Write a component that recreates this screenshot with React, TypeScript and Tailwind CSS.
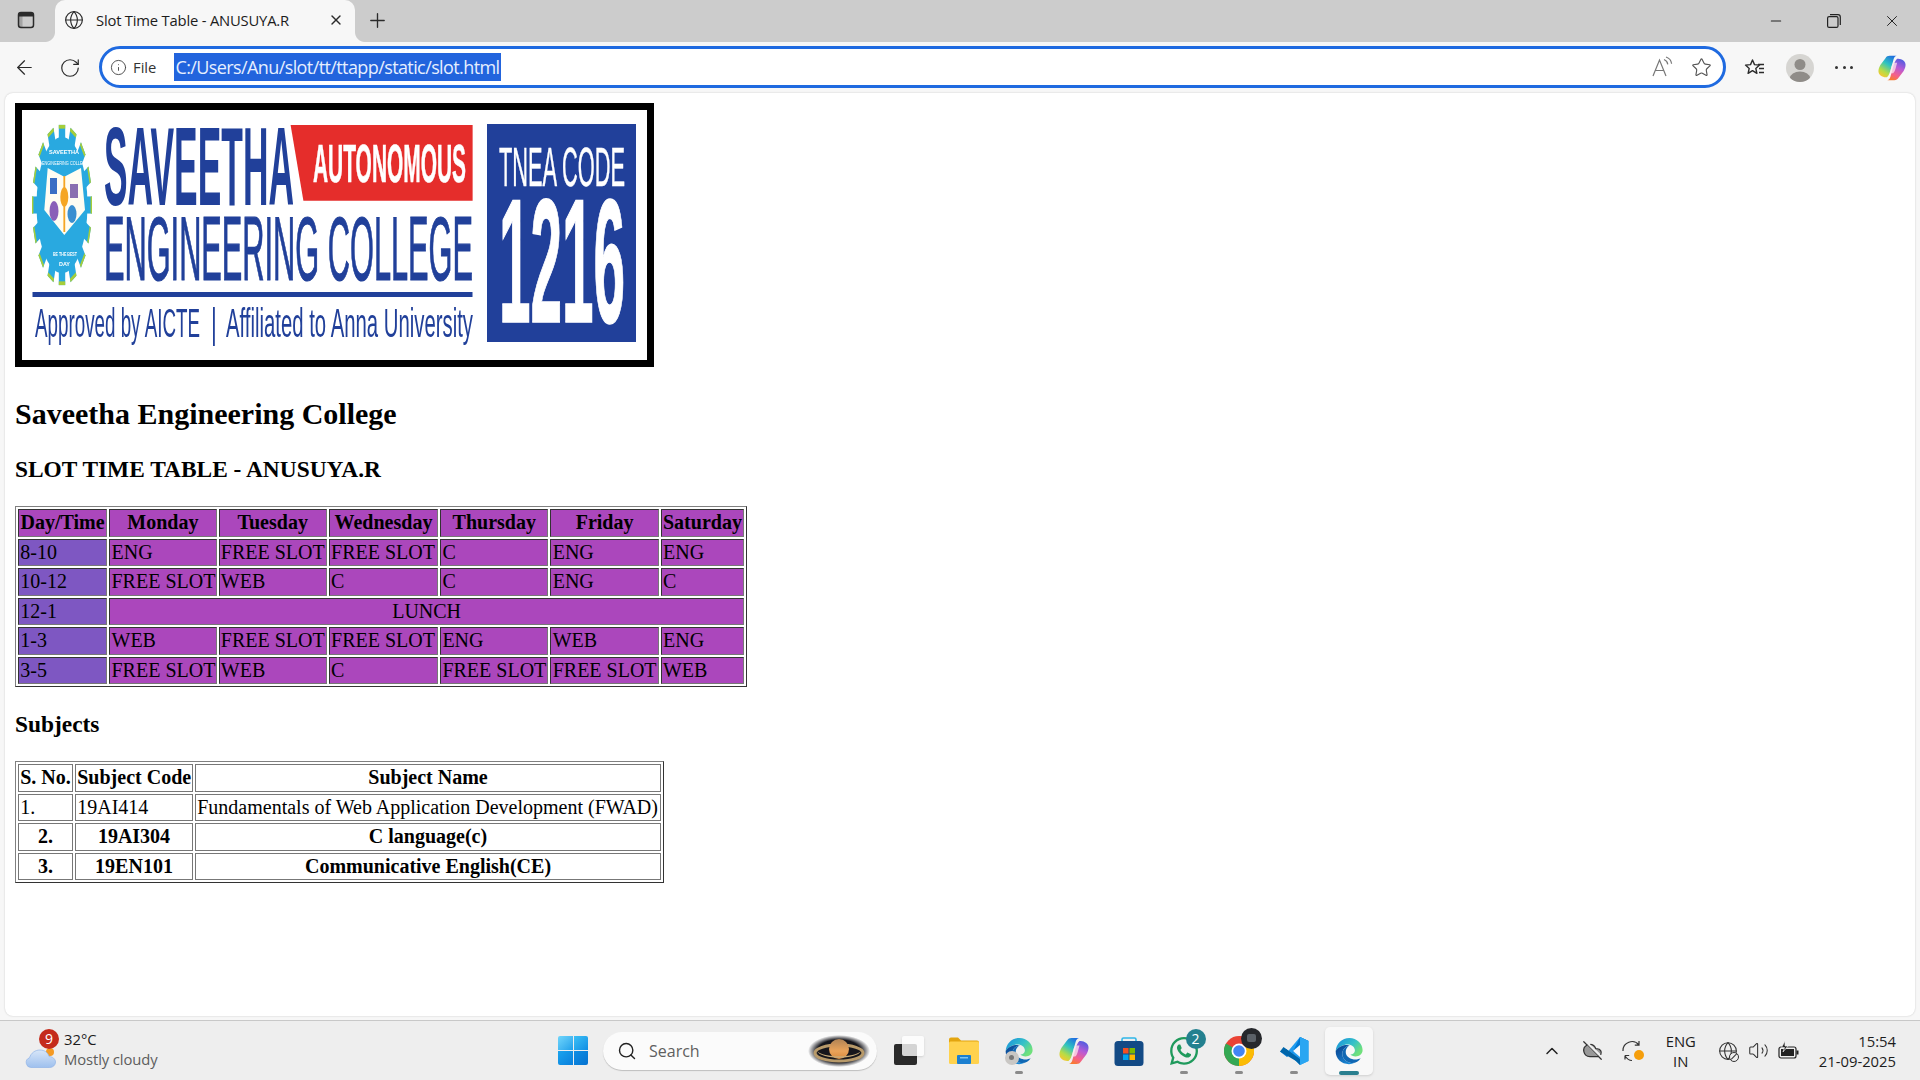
import { ArrowLeft, ChevronUp, CloudOff, Globe, Info, Minus, Plus, RotateCw, Search, Star, Volume2, X } from "lucide-react";
import { FaWhatsapp } from "react-icons/fa";

const slots = [
  ["8-10", "ENG", "FREE SLOT", "FREE SLOT", "C", "ENG", "ENG"],
  ["10-12", "FREE SLOT", "WEB", "C", "C", "ENG", "C"],
  ["12-1"],
  ["1-3", "WEB", "FREE SLOT", "FREE SLOT", "ENG", "WEB", "ENG"],
  ["3-5", "FREE SLOT", "WEB", "C", "FREE SLOT", "FREE SLOT", "WEB"],
];

const days = ["Day/Time", "Monday", "Tuesday", "Wednesday", "Thursday", "Friday", "Saturday"];

const cell = "border border-t-[#333333] border-l-[#333333] border-r-[#777777] border-b-[#777777] h-[27.5px] px-[1.25px] py-0";
const subjectCell = "border border-[#777777] h-[27.5px] px-[1.25px] py-0";

function SlotTable() {
  return (
    <table className="border-separate border-spacing-[2.5px] border border-t-[#808080] border-l-[#808080] border-r-[#333333] border-b-[#333333] table-fixed w-[732px]">
      <colgroup>
        <col className="w-[89px]" />
        <col className="w-[107px]" />
        <col className="w-[108px]" />
        <col className="w-[109px]" />
        <col className="w-[108px]" />
        <col className="w-[108px]" />
        <col className="w-[83px]" />
      </colgroup>
      <thead>
        <tr>
          {days.map((d) => (
            <th key={d} className={`${cell} bg-[#ab47bc] font-bold text-center whitespace-nowrap`}>
              {d}
            </th>
          ))}
        </tr>
      </thead>
      <tbody>
        {slots.map((row) => (
          <tr key={row[0]}>
            <td className={`${cell} bg-[#7e57c2]`}>{row[0]}</td>
            {row.length === 1 ? (
              <td colSpan={6} className={`${cell} bg-[#ab47bc] text-center`}>
                LUNCH
              </td>
            ) : (
              row.slice(1).map((c, i) => (
                <td key={i} className={`${cell} bg-[#ab47bc] whitespace-nowrap`}>
                  {c}
                </td>
              ))
            )}
          </tr>
        ))}
      </tbody>
    </table>
  );
}

function SubjectTable() {
  return (
    <table className="border-separate border-spacing-[2.5px] border border-t-[#808080] border-l-[#808080] border-r-[#333333] border-b-[#333333] table-fixed w-[649px]">
      <colgroup>
        <col className="w-[55px]" />
        <col className="w-[118px]" />
        <col className="w-[466px]" />
      </colgroup>
      <tbody>
        <tr>
          <th className={`${subjectCell} whitespace-nowrap`}>S. No.</th>
          <th className={`${subjectCell} whitespace-nowrap`}>Subject Code</th>
          <th className={subjectCell}>Subject Name</th>
        </tr>
        <tr>
          <td className={subjectCell}>1.</td>
          <td className={subjectCell}>19AI414</td>
          <td className={`${subjectCell} whitespace-nowrap`}>Fundamentals of Web Application Development (FWAD)</td>
        </tr>
        <tr>
          <th className={subjectCell}>2.</th>
          <th className={subjectCell}>19AI304</th>
          <th className={subjectCell}>C language(c)</th>
        </tr>
        <tr>
          <th className={subjectCell}>3.</th>
          <th className={subjectCell}>19EN101</th>
          <th className={subjectCell}>Communicative English(CE)</th>
        </tr>
      </tbody>
    </table>
  );
}

function CollegeBanner() {
  const blue = "#21409a";
  const teeth = Array.from({ length: 16 }, (_, i) => i * 22.5);
  return (
    <svg viewBox="0 0 625 250" className="block w-[625px] h-[250px] blur-[0.4px]" fontFamily="'Liberation Sans', sans-serif">
      <rect width="625" height="250" fill="#ffffff" />
      <g transform="translate(40 95) scale(1 2.67)">
        {teeth.map((a) => (
          <g key={a} transform={`rotate(${a})`}>
            <rect x="-3.2" y="-30" width="6.4" height="6" fill="#29a9e0" />
            <rect x="-3.2" y="-30" width="6.4" height="1.4" fill="#a6ce39" />
          </g>
        ))}
        <circle r="25.5" fill="#29a9e0" />
      </g>
      <polygon points="25.7,58 42.3,66.7 59,58 63,100 42.3,125 22.3,100" fill="#fffdf2" />
      <rect x="41.4" y="66" width="1.8" height="56" fill="#f5a623" />
      <ellipse cx="42.3" cy="87" rx="4" ry="10" fill="#f5a623" />
      <rect x="28" y="68" width="7" height="16" fill="#3a6fc4" />
      <ellipse cx="32" cy="101" rx="4.5" ry="10" fill="#8a5fb8" />
      <rect x="48" y="74" width="8" height="14" fill="#8a6fb0" />
      <ellipse cx="50" cy="104" rx="4.5" ry="9" fill="#3a8fd0" />
      <text x="27" y="44" fontSize="6" fontWeight="bold" fill="#ffffff" textLength="30" lengthAdjust="spacingAndGlyphs">SAVEETHA</text>
      <text x="20" y="55" fontSize="6" fill="#ffffff" textLength="46" lengthAdjust="spacingAndGlyphs">ENGINEERING COLLEGE</text>
      <text x="31" y="146" fontSize="6" fontWeight="bold" fill="#ffffff" textLength="24" lengthAdjust="spacingAndGlyphs">BE THE BEST</text>
      <text x="37" y="156" fontSize="6" fontWeight="bold" fill="#ffffff" textLength="11" lengthAdjust="spacingAndGlyphs">DAY</text>

      <text x="82" y="95" fontSize="112" fontWeight="bold" fill={blue} textLength="190" lengthAdjust="spacingAndGlyphs">SAVEETHA</text>
      <polygon points="268.6,15 450.6,15 450.6,90.7 281.4,90.7" fill="#e52d2b" />
      <text x="291" y="72" fontSize="54" fontWeight="bold" fill="#ffffff" stroke="#ffffff" strokeWidth="0.6" textLength="153" lengthAdjust="spacingAndGlyphs">AUTONOMOUS</text>
      <text x="82" y="170" fontSize="91" fill={blue} textLength="369" lengthAdjust="spacingAndGlyphs" stroke={blue} strokeWidth="1.2">ENGINEERING COLLEGE</text>
      <rect x="10.5" y="182" width="440" height="5" fill={blue} />
      <text x="13" y="227" fontSize="40" fill={blue} textLength="165" lengthAdjust="spacingAndGlyphs">Approved by AICTE</text>
      <rect x="191" y="197" width="1.8" height="39" fill={blue} />
      <text x="204" y="227" fontSize="40" fill={blue} textLength="247" lengthAdjust="spacingAndGlyphs">Affiliated to Anna University</text>
      <rect x="465" y="14" width="149" height="218" fill={blue} />
      <text x="477" y="76" fontSize="56" fill="#ffffff" stroke="#ffffff" strokeWidth="0.5" textLength="126" lengthAdjust="spacingAndGlyphs">TNEA CODE</text>
      <text x="477" y="212" fontSize="176" fontWeight="bold" fill="#ffffff" stroke="#ffffff" strokeWidth="1.5" textLength="126" lengthAdjust="spacingAndGlyphs">1216</text>
    </svg>
  );
}

function SidebarIcon() {
  return (
    <svg width="18" height="18" viewBox="0 0 18 18" fill="none">
      <rect x="1.5" y="1.5" width="15" height="15" rx="2.5" stroke="#2b2b2b" strokeWidth="1.5" />
      <path d="M3 2h12a1 1 0 0 1 1 1v2.500H2V3a1 1 0 0 1 1-1z" fill="#2b2b2b" />
      <rect x="2" y="5" width="3.500" height="11" fill="#2b2b2b" opacity="0.25" />
    </svg>
  );
}

function RestoreIcon() {
  return (
    <svg width="14" height="14" viewBox="0 0 14 14" fill="none" stroke="#222222" strokeWidth="1.2">
      <rect x="0.6" y="2.6" width="10.4" height="10.800" rx="1.500" />
      <path d="M3 0.700h8a2.300 2.300 0 0 1 2.300 2.300v8" />
    </svg>
  );
}

function ReadAloudIcon() {
  return (
    <svg width="22" height="22" viewBox="0 0 22 22" fill="none" stroke="#777777" strokeWidth="1.2">
      <path d="M2 20 8.500 4 15 20M4.500 14.500h8" />
      <path d="M13 3.500c2 .8 3.500 2.600 3.800 4.800M15 1c3 1 5.300 3.600 5.600 6.800" />
    </svg>
  );
}

function FavoritesIcon() {
  return (
    <svg width="22" height="22" viewBox="0 0 22 22" fill="none" stroke="#2b2b2b" strokeWidth="1.400">
      <path d="M8.500 3l2 4.600 5 .5-3.700 3.300 1.100 4.900-4.400-2.600-4.400 2.600 1.100-4.900L1.500 8.100l5-.5z" strokeLinejoin="round" />
      <path d="M14 7.500h6M15 11.500h5M15 15.500h5" />
    </svg>
  );
}

function AvatarIcon() {
  return (
    <div className="w-[28px] h-[28px] rounded-full bg-[#d6d5d2] overflow-hidden flex items-center justify-center">
      <svg width="28" height="28" viewBox="0 0 28 28" fill="#8f8c88">
        <circle cx="14" cy="10.500" r="5.500" />
        <ellipse cx="14" cy="24" rx="10" ry="6.500" />
      </svg>
    </div>
  );
}

function CopilotIcon({ size = 30, id }: { size?: number; id: string }) {
  return (
    <svg width={size} height={size} viewBox="0 0 30 30">
      <defs>
        <linearGradient id={`${id}a`} x1="0.75" y1="0" x2="0.2" y2="1">
          <stop offset="0" stopColor="#1f6fe0" />
          <stop offset="0.4" stopColor="#2fc4c0" />
          <stop offset="0.75" stopColor="#b8dc45" />
          <stop offset="1" stopColor="#fbc62f" />
        </linearGradient>
        <linearGradient id={`${id}b`} x1="0.7" y1="0" x2="0.3" y2="1">
          <stop offset="0" stopColor="#4f5ce0" />
          <stop offset="0.4" stopColor="#b85ad6" />
          <stop offset="0.75" stopColor="#f5608a" />
          <stop offset="1" stopColor="#f87a30" />
        </linearGradient>
      </defs>
      <path d="M8 4.500C9 2.800 10.500 2 12.500 2H20c-2 .5-2.800 2-3.400 4L14 15.500c-1.200 4.500-2.500 8-4.500 9.500-3 0-8.500-1-9-6-.2-2.500.8-4.800 2-7.200z" fill={`url(#${id}a)`} />
      <path d="M22 25.500c-1 1.700-2.500 2.500-4.500 2.500H10c2-.5 2.800-2 3.400-4L16 14.500c1.200-4.500 2.500-8 4.500-9.500 3 0 8.500 1 9 6 .2 2.500-.8 4.800-2 7.200z" fill={`url(#${id}b)`} />
      <path d="M16.500 9.500h4l-1.500 5.500c-.8 3-1.500 4.500-2.800 5.500h-3.700l1.500-5.500c.6-2.500 1.200-4.200 2.500-5.500z" fill="#ffe6ee" opacity="0.75" />
    </svg>
  );
}

function EdgeIcon({ size = 30, id }: { size?: number; id: string }) {
  return (
    <svg width={size} height={size} viewBox="0 0 32 32">
      <defs>
        <linearGradient id={`${id}a`} x1="0.1" y1="0.2" x2="0.9" y2="0.7">
          <stop offset="0" stopColor="#1f9bd8" />
          <stop offset="0.55" stopColor="#35c1c8" />
          <stop offset="1" stopColor="#6fe07c" />
        </linearGradient>
        <linearGradient id={`${id}b`} x1="0.8" y1="1" x2="0.2" y2="0.2">
          <stop offset="0" stopColor="#1a8fdc" />
          <stop offset="1" stopColor="#0c4f9c" />
        </linearGradient>
      </defs>
      <path d="M16.500 2C24.500 2 30.500 8 30.500 15c0 4.500-3.500 6.800-7.500 6.800-2.500 0-4.500-.8-5.500-2 3-.2 4.800-2 4.800-4.300 0-3.800-3.500-6.500-7.600-6.500C9.500 9 5 11.500 1.800 16 2.200 8 8.500 2 16.500 2z" fill={`url(#${id}a)`} />
      <path d="M1.800 16c3-4.500 7.500-6.500 12-6.500 1 0 2 .2 3 .5-4.500.7-8 4.500-8 9 0 4.500 3.500 9 9.500 9.800 1.500.2 3 .1 4-.2C20 29.500 18 30 16 30 8 30 1.500 24 1.800 16z" fill={`url(#${id}b)`} />
      <path d="M16.800 10C12.300 10.700 8.800 14.500 8.800 19c0 4.500 3.500 9 9.500 9.800 4.200.5 8-1.500 10.200-5.300-1.500 1-3.500 1.600-5.500 1.600-5 0-10.500-3.100-10.500-8.100 0-3 1.500-5.200 3.800-7z" fill="#1068b4" />
    </svg>
  );
}

function ChromeIcon() {
  return (
    <svg width="30" height="30" viewBox="0 0 30 30" fill="none">
      <circle cx="15" cy="15" r="15" fill="#ea4335" />
      <path d="M15 15 2 7.500A15 15 0 0 0 15 30z" fill="#34a853" />
      <path d="M15 15 15 30A15 15 0 0 0 28 7.500z" fill="#fbbc04" />
      <path d="M15 15 15 0A15 15 0 0 1 28 7.500z" fill="#ea4335" />
      <circle cx="15" cy="15" r="7.500" fill="#ffffff" />
      <circle cx="15" cy="15" r="5.800" fill="#4285f4" />
    </svg>
  );
}

function VsCodeIcon() {
  return (
    <svg width="30" height="30" viewBox="0 0 30 30">
      <path d="M21 1 29.500 5v20L21 29 8 16.500z" fill="#1f9cf0" />
      <path d="M21 1 29.500 5 21 11 8 21 1 15.500 7 13l6 4.500z" fill="#0078d4" />
      <path d="M1 15.500 4.500 11 21 23 21 29 17 25z" fill="#0065a9" />
      <path d="M21 1 29.500 5v20L21 29z" fill="#2aa6f2" />
      <path d="M21 9v12l-7-6z" fill="#ffffff" opacity="0.95" />
    </svg>
  );
}

function StoreIcon() {
  return (
    <svg width="30" height="30" viewBox="0 0 30 30">
      <path d="M8 6V3.500A1.500 1.500 0 0 1 9.500 2h11A1.500 1.500 0 0 1 22 3.500V6" fill="none" stroke="#2fb6e8" strokeWidth="1.600" />
      <rect x="0.500" y="5" width="29" height="25" rx="3.500" fill="#134a85" />
      <rect x="9" y="12" width="5.500" height="5.500" fill="#f25022" />
      <rect x="15.500" y="12" width="5.500" height="5.500" fill="#7fba00" />
      <rect x="9" y="18.500" width="5.500" height="5.500" fill="#00a4ef" />
      <rect x="15.500" y="18.500" width="5.500" height="5.500" fill="#ffb900" />
    </svg>
  );
}

function FolderIcon() {
  return (
    <svg width="30" height="27" viewBox="0 0 30 27">
      <path d="M0 2.500A2 2 0 0 1 2 .500h7l3 3h16a2 2 0 0 1 2 2V8H0z" fill="#e3a50f" />
      <rect y="4.500" width="30" height="22.500" rx="1.500" fill="#ffd24d" />
      <rect x="8" y="18" width="14" height="9" rx="1" fill="#1b7fd0" />
      <rect x="11" y="20" width="8" height="1.500" fill="#7cc4f2" />
    </svg>
  );
}

function TaskViewIcon() {
  return (
    <div className="relative w-[30px] h-[29px]">
      <div className="absolute left-0 bottom-0 w-[23px] h-[21px] rounded-[2px] bg-[#2a2a2a]" />
      <div className="absolute right-0 top-0 w-[22px] h-[20px] rounded-[2px] bg-white/80 shadow-sm" />
    </div>
  );
}

function SaturnThumb() {
  return (
    <svg width="62" height="32" viewBox="0 0 62 32">
      <defs>
        <radialGradient id="glow" cx="0.5" cy="0.5" r="0.5">
          <stop offset="0.7" stopColor="#16161c" />
          <stop offset="1" stopColor="#16161c" stopOpacity="0" />
        </radialGradient>
        <linearGradient id="planet" x1="0" y1="0" x2="0" y2="1">
          <stop offset="0" stopColor="#b08355" />
          <stop offset="0.6" stopColor="#eaa35a" />
          <stop offset="1" stopColor="#d98a3e" />
        </linearGradient>
      </defs>
      <ellipse cx="31" cy="16" rx="31" ry="16" fill="url(#glow)" />
      <ellipse cx="31" cy="18" rx="24" ry="8" fill="none" stroke="#b89a6a" strokeWidth="3" />
      <circle cx="31" cy="14" r="10" fill="url(#planet)" />
      <path d="M9 16c6 7 38 7 44 0-4 9-40 9-44 0z" fill="#c9ab78" />
    </svg>
  );
}

function WeatherIcon() {
  return (
    <svg width="32" height="22" viewBox="0 0 32 22">
      <defs>
        <linearGradient id="cloud" x1="0" y1="0" x2="0" y2="1">
          <stop offset="0" stopColor="#d8e6f8" />
          <stop offset="1" stopColor="#9ec0ee" />
        </linearGradient>
      </defs>
      <circle cx="25" cy="5" r="4" fill="#f59a23" />
      <path d="M6 20.500a5 5 0 0 1-1.500-9.700C6 6 10 3 15 3c4.500 0 8 2.500 9 6.500 3.500 0 6.500 2.500 6.500 5.500s-2.500 5.500-6 5.500z" fill="url(#cloud)" stroke="#8fb3e6" strokeWidth="0.7" />
    </svg>
  );
}

function SyncIcon() {
  return (
    <div className="relative w-[22px] h-[22px]">
      <svg width="22" height="22" viewBox="0 0 22 22" fill="none" stroke="#333333" strokeWidth="1.200">
        <path d="M1 11a9 9 0 0 1 16-6M17 1v4.200h-4.200" />
        <path d="M3 15.500h4.200M3 15.500v4M3 16c2 3 4.500 4.500 7 4.500" />
      </svg>
      <span className="absolute right-0 bottom-[2px] w-[10px] h-[10px] rounded-full bg-[#f59e0b]" />
    </div>
  );
}

function NetworkIcon() {
  return (
    <div className="relative w-[20px] h-[20px]">
      <Globe size={20} strokeWidth={1.3} color="#333333" />
      <span className="absolute right-[-1px] bottom-[-1px] w-[10px] h-[10px] rounded-full border border-[#333333] bg-[#eeeeee] flex items-center justify-center">
        <span className="block w-[8px] h-px bg-[#333333] -rotate-45" />
      </span>
    </div>
  );
}

function BatteryIcon() {
  return (
    <svg width="22" height="20" viewBox="0 0 22 20" fill="none">
      <rect x="1" y="6" width="17" height="11" rx="2" stroke="#222222" strokeWidth="1.200" />
      <rect x="3" y="8" width="13" height="7" fill="#222222" />
      <rect x="18.500" y="9.500" width="2" height="4" fill="#222222" />
      <path d="M7 0 3.500 6.500h3L5 11l5-6H7z" fill="#222222" stroke="#eeeeee" strokeWidth="0.700" />
    </svg>
  );
}

function TaskbarApp({ children, mark, active }: { children: React.ReactNode; mark?: boolean; active?: boolean }) {
  return (
    <div className={`flex flex-col items-center justify-center relative w-[48px] h-[48px] mx-[3.5px] rounded-[5px] ${active ? "bg-[#f8f8f8] shadow-sm" : ""}`}>
      {children}
      {mark && <span className="absolute bottom-[1px] w-[8px] h-[3px] rounded-full bg-[#8a8a8a]" />}
      {active && <span className="absolute bottom-[0px] w-[20px] h-[4px] rounded-full bg-[#2a7f8f]" />}
    </div>
  );
}

export default function App() {
  return (
    <div className="h-screen w-full overflow-hidden flex flex-col bg-[#f7f7f7] [font-family:'Open_Sans',sans-serif] text-[#1c1c1c]">
      {/* tab strip */}
      <div className="h-[42px] shrink-0 bg-[#cccccc] flex items-end">
        <div className="w-[45px] h-[42px] flex items-center justify-center pl-[6px] pb-[2px]">
          <SidebarIcon />
        </div>
        <div className="w-[10px] h-[10px] bg-[radial-gradient(circle_at_0_0,#cccccc_9.5px,#f7f7f7_10.5px)]" />
        <div className="w-[300px] h-[42px] bg-[#f7f7f7] rounded-t-[10px] flex items-center pl-[9px] pr-[11px] pb-[2px]">
          <Globe size={20} strokeWidth={1.4} color="#2b2b2b" />
          <span className="ml-[12px] flex-1 text-[14.8px] whitespace-nowrap tracking-[-0.2px]">Slot Time Table - ANUSUYA.R</span>
          <X size={16} strokeWidth={2} color="#2b2b2b" />
        </div>
        <div className="w-[10px] h-[10px] bg-[radial-gradient(circle_at_100%_0,#cccccc_9.5px,#f7f7f7_10.5px)]" />
        <div className="h-[42px] flex items-center ml-[1px] pb-[2px]">
          <Plus size={23} strokeWidth={1.4} color="#2b2b2b" />
        </div>
        <div className="flex-1" />
        <div className="h-[42px] flex items-center pb-[1px]">
          <Minus size={16} strokeWidth={1.6} color="#222222" />
          <div className="ml-[43px]">
            <RestoreIcon />
          </div>
          <div className="ml-[42px] mr-[19px]">
            <X size={18} strokeWidth={1.3} color="#222222" />
          </div>
        </div>
      </div>

      {/* toolbar */}
      <div className="h-[51px] shrink-0 flex items-center">
        <div className="w-[49px] flex justify-center">
          <ArrowLeft size={23} strokeWidth={1.3} color="#2b2b2b" />
        </div>
        <div className="w-[50px] flex justify-center pr-[8px]">
          <RotateCw size={22} strokeWidth={1.3} color="#2b2b2b" />
        </div>
        <div className="w-[1627px] h-[42px] mb-[1px] rounded-full border-[3px] border-[#1f6ae0] bg-white flex items-center pl-[8px] pr-[11px]">
          <Info size={17} strokeWidth={1.3} color="#444444" />
          <span className="ml-[6px] text-[14.8px] text-[#333333]">File</span>
          <span className="ml-[18px] h-[28px] px-[1px] flex items-center bg-[#2264dd] text-[#e6efff] text-[18px] tracking-[-0.6px] whitespace-nowrap">
            C:/Users/Anu/slot/tt/ttapp/static/slot.html
          </span>
          <div className="flex-1" />
          <ReadAloudIcon />
          <div className="ml-[18px]">
            <Star size={21} strokeWidth={1.3} color="#555555" />
          </div>
        </div>
        <div className="ml-[18px]">
          <FavoritesIcon />
        </div>
        <div className="ml-[20px]">
          <AvatarIcon />
        </div>
        <div className="ml-[21px] w-[18px] flex justify-between">
          <span className="w-[3px] h-[3px] rounded-full bg-[#333333]" />
          <span className="w-[3px] h-[3px] rounded-full bg-[#333333]" />
          <span className="w-[3px] h-[3px] rounded-full bg-[#333333]" />
        </div>
        <div className="ml-[25px]">
          <CopilotIcon size={28} id="cpa" />
        </div>
      </div>

      {/* page */}
      <main className="flex-1 mx-[5px] bg-white rounded-t-[8px] rounded-b-[8px] shadow-[0_0_2px_rgba(0,0,0,0.2)] px-[10px] pt-[10px] [font-family:'Liberation_Serif','Times_New_Roman',serif] text-[20px] text-black leading-[23px]">
        <div className="w-fit border-[7px] border-black">
          <CollegeBanner />
        </div>
        <h2 className="text-[30px] leading-[34px] font-bold mt-[30px] mb-[25px] whitespace-nowrap">Saveetha Engineering College</h2>
        <h3 className="text-[23.4px] leading-[27px] font-bold mb-[23px] whitespace-nowrap">SLOT TIME TABLE - ANUSUYA.R</h3>
        <SlotTable />
        <h4 className="text-[23.4px] leading-[27px] font-bold mt-[24px] mb-[23px]">Subjects</h4>
        <SubjectTable />
      </main>

      {/* taskbar */}
      <div className="h-[60px] mt-[4px] shrink-0 bg-[#eeeeee] border-t border-[#c8c8c8] flex items-center relative">
        <div className="w-[558px] flex items-center pl-[25px] shrink-0">
          <div className="relative w-[32px] h-[36px] flex items-end">
            <WeatherIcon />
            <span className="absolute left-[14px] top-[-4px] w-[20px] h-[20px] rounded-full bg-[#c42b1c] text-white text-[14px] flex items-center justify-center">9</span>
          </div>
          <div className="ml-[7px] flex flex-col mb-[3px]">
            <span className="text-[14.8px] leading-[20px] text-[#1c1c1c]">32°C</span>
            <span className="text-[14.8px] leading-[20px] text-[#5d5d5d] tracking-[-0.1px]">Mostly cloudy</span>
          </div>
        </div>

        <div className="w-[30px] h-[29px] grid grid-cols-2 gap-[1px] shrink-0">
          <span className="rounded-tl-[2px] bg-gradient-to-br from-[#6fd6fb] to-[#1aa0ea]" />
          <span className="rounded-tr-[2px] bg-gradient-to-br from-[#3cc0f5] to-[#0f8ee4]" />
          <span className="rounded-bl-[2px] bg-gradient-to-br from-[#1ba4ee] to-[#0a7fdc]" />
          <span className="rounded-br-[2px] bg-gradient-to-br from-[#0f8ee4] to-[#0672d0]" />
        </div>

        <div className="ml-[15px] w-[274px] h-[38px] rounded-full bg-[#fbfbfb] shadow-[0_1px_1px_rgba(0,0,0,0.2)] flex items-center pl-[14px] pr-[7px] shrink-0">
          <Search size={20} strokeWidth={1.7} color="#222222" />
          <span className="ml-[12px] text-[16px] text-[#5f5f5f]">Search</span>
          <div className="flex-1" />
          <SaturnThumb />
        </div>

        <div className="ml-[17px] shrink-0 flex items-center w-[30px]">
          <TaskViewIcon />
        </div>

        <div className="ml-[12px] flex items-center shrink-0">
          <TaskbarApp>
            <FolderIcon />
          </TaskbarApp>
          <TaskbarApp mark>
            <div className="relative">
              <EdgeIcon id="ega" />
              <span className="absolute left-[1px] bottom-[1px] w-[14px] h-[14px] rounded-full bg-[#c9c7c4] flex items-center justify-center">
                <span className="w-[5px] h-[5px] rounded-full bg-[#777777]" />
              </span>
            </div>
          </TaskbarApp>
          <TaskbarApp>
            <CopilotIcon id="cpb" />
          </TaskbarApp>
          <TaskbarApp>
            <StoreIcon />
          </TaskbarApp>
          <TaskbarApp mark>
            <div className="relative">
              <FaWhatsapp size={32} color="#1f9a5c" />
              <span className="absolute right-[-6px] top-[-6px] w-[20px] h-[20px] rounded-full bg-[#23808f] text-white text-[14px] flex items-center justify-center">2</span>
            </div>
          </TaskbarApp>
          <TaskbarApp mark>
            <div className="relative">
              <ChromeIcon />
              <span className="absolute right-[-8px] top-[-8px] w-[21px] h-[21px] rounded-full bg-[#26282c] flex items-center justify-center">
                <span className="w-[9px] h-[8px] rounded-[2px] bg-[#5b6168]" />
              </span>
            </div>
          </TaskbarApp>
          <TaskbarApp mark>
            <VsCodeIcon />
          </TaskbarApp>
          <TaskbarApp active>
            <EdgeIcon id="egb" />
          </TaskbarApp>
        </div>

        <div className="flex-1" />
        <div className="flex items-center shrink-0 pr-[24px] text-[#1c1c1c]">
          <ChevronUp size={20} strokeWidth={1.8} color="#222222" />
          <div className="ml-[20px]">
            <CloudOff size={21} strokeWidth={1.4} color="#333333" fill="#999999" />
          </div>
          <div className="ml-[19px]">
            <SyncIcon />
          </div>
          <div className="ml-[22px] flex flex-col items-center text-[14.8px] leading-[20px]">
            <span>ENG</span>
            <span>IN</span>
          </div>
          <div className="ml-[22px]">
            <NetworkIcon />
          </div>
          <div className="ml-[10px]">
            <Volume2 size={21} strokeWidth={1.2} color="#333333" />
          </div>
          <div className="ml-[9px]">
            <BatteryIcon />
          </div>
          <div className="ml-[19px] flex flex-col items-end text-[14.8px] leading-[20px]">
            <span>15:54</span>
            <span>21-09-2025</span>
          </div>
        </div>
      </div>
    </div>
  );
}
